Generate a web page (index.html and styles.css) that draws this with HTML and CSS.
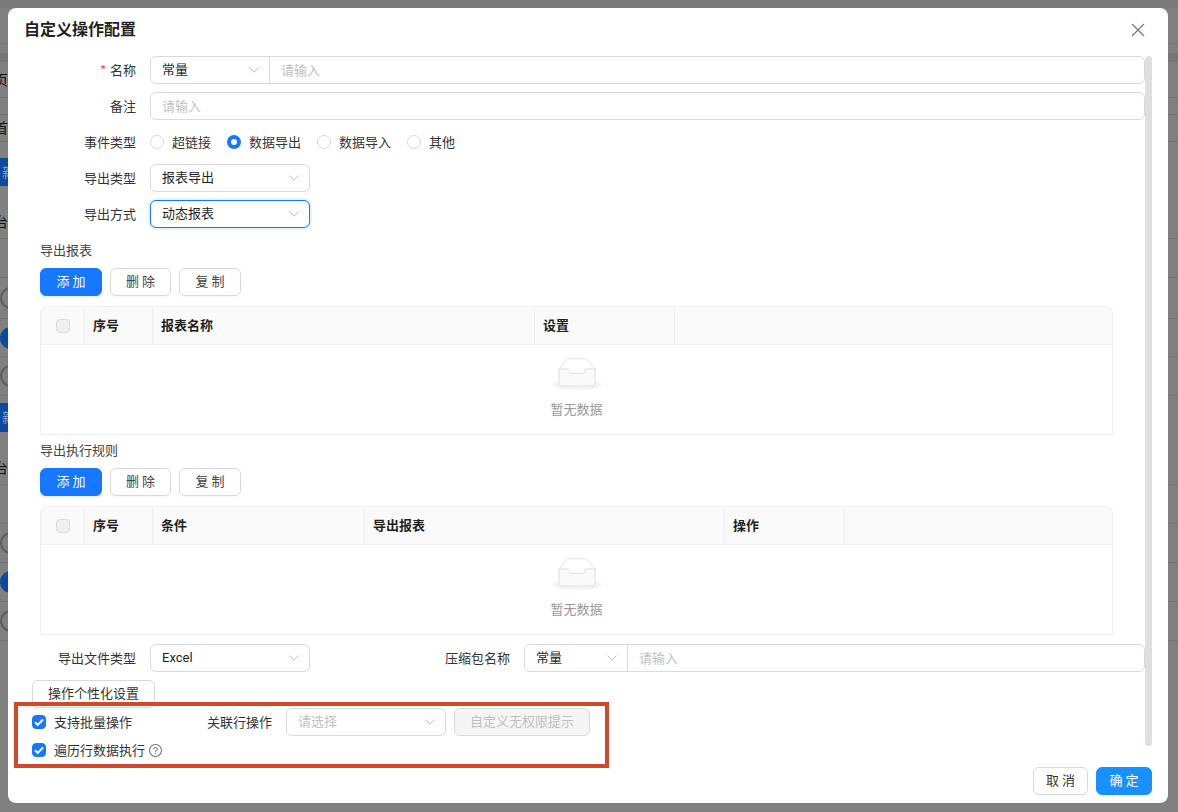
FILE: index.html
```html
<!DOCTYPE html>
<html lang="zh-CN">
<head>
  <meta charset="UTF-8" />
  <title>自定义操作配置</title>
  <link rel="stylesheet" href="styles.css">
</head>
<body>

  <!-- page behind the mask, only its edges show -->
  <div class="backdrop">
    <div class="bg-top"></div>
    <div class="bg-row h10"></div>
    <div class="bg-band"></div>
    <div class="bg-row h36"><span class="bg-char">页</span></div>
    <div class="bg-row h17"></div>
    <div class="bg-row h27"><span class="bg-char">首</span></div>
    <div class="bg-blank h16"></div>
    <div class="bg-btn">新</div>
    <div class="bg-blank h19"></div>
    <div class="bg-row h34"><span class="bg-char">台</span></div>
    <div class="bg-row h39"></div>
    <div class="bg-row h41"><span class="bg-ring"></span></div>
    <div class="bg-row h38"><span class="bg-dot"></span></div>
    <div class="bg-row h39"><span class="bg-ring"></span></div>
    <div class="bg-blank h7"></div>
    <div class="bg-btn h29">新</div>
    <div class="bg-blank h19"></div>
    <div class="bg-row h34"><span class="bg-char">台</span></div>
    <div class="bg-row h39"></div>
    <div class="bg-row h39"><span class="bg-ring"></span></div>
    <div class="bg-row h39"><span class="bg-dot"></span></div>
    <div class="bg-row h39"><span class="bg-ring"></span></div>
  </div>

  <div class="modal">
    <div class="modal-header">
      <h2>自定义操作配置</h2>
      <svg class="close-icon" width="14" height="14" viewBox="0 0 14 14">
        <path d="M1 1l12 12M13 1L1 13" stroke="#777" stroke-width="1.2" fill="none"/>
      </svg>
    </div>

    <div class="modal-body">
      <div class="form">
        <div class="form-group">
          <div class="form-row">
            <label class="form-label"><span class="required">*</span>名称</label>
            <div class="input-group grow">
              <div class="group-select w119">常量
                <svg class="chevron" viewBox="0 0 10 6"><path d="M.5.5L5 5.200 9.500.5"/></svg>
              </div>
              <div class="group-input">请输入</div>
            </div>
          </div>
          <div class="form-row">
            <label class="form-label">备注</label>
            <div class="input grow placeholder">请输入</div>
          </div>
          <div class="form-row">
            <label class="form-label">事件类型</label>
            <div class="radios">
              <span class="radio"><i></i>超链接</span>
              <span class="radio checked"><i></i>数据导出</span>
              <span class="radio"><i></i>数据导入</span>
              <span class="radio"><i></i>其他</span>
            </div>
          </div>
          <div class="form-row">
            <label class="form-label">导出类型</label>
            <div class="select">报表导出
              <svg class="chevron" viewBox="0 0 10 6"><path d="M.5.5L5 5.200 9.500.5"/></svg>
            </div>
          </div>
          <div class="form-row">
            <label class="form-label">导出方式</label>
            <div class="select focused">动态报表
              <svg class="chevron" viewBox="0 0 10 6"><path d="M.5.5L5 5.200 9.500.5"/></svg>
            </div>
          </div>
        </div>

        <div class="section">
          <div class="section-title">导出报表</div>
          <div class="toolbar">
            <button class="btn primary">添 加</button>
            <button class="btn">删 除</button>
            <button class="btn">复 制</button>
          </div>
          <div class="table-wrap">
            <div class="table-head">
              <div class="cell check-cell"><span class="checkbox"></span></div>
              <div class="cell w68">序号</div>
              <div class="cell w382">报表名称</div>
              <div class="cell w140">设置</div>
              <div class="cell fill"></div>
            </div>
            <div class="table-empty">
              <svg class="empty-icon" width="50" height="32" viewBox="0 0 64 41">
                <g transform="translate(0 1)" fill="none" fill-rule="evenodd">
                  <ellipse fill="#f5f5f5" cx="32" cy="33" rx="32" ry="7"/>
                  <g fill-rule="nonzero" stroke="#d9d9d9">
                    <path d="M55 12.760L44.854 1.258C44.367.474 43.656 0 42.907 0H21.093c-.749 0-1.460.474-1.947 1.257L9 12.761V22h46v-9.240z"/>
                    <path d="M41.613 15.931c0-1.605.994-2.930 2.227-2.931H55v18.137C55 33.260 53.680 35 52.050 35h-40.100C10.320 35 9 33.259 9 31.137V13h11.160c1.233 0 2.227 1.323 2.227 2.928v.022c0 1.605 1.005 2.901 2.237 2.901h14.752c1.232 0 2.237-1.308 2.237-2.913v-.007z" fill="#fafafa"/>
                  </g>
                </g>
              </svg>
              <div class="empty-text">暂无数据</div>
            </div>
          </div>
        </div>

        <div class="section">
          <div class="section-title">导出执行规则</div>
          <div class="toolbar">
            <button class="btn primary">添 加</button>
            <button class="btn">删 除</button>
            <button class="btn">复 制</button>
          </div>
          <div class="table-wrap">
            <div class="table-head">
              <div class="cell check-cell"><span class="checkbox"></span></div>
              <div class="cell w68">序号</div>
              <div class="cell w212">条件</div>
              <div class="cell w360">导出报表</div>
              <div class="cell w120">操作</div>
              <div class="cell fill"></div>
            </div>
            <div class="table-empty">
              <svg class="empty-icon" width="50" height="32" viewBox="0 0 64 41">
                <g transform="translate(0 1)" fill="none" fill-rule="evenodd">
                  <ellipse fill="#f5f5f5" cx="32" cy="33" rx="32" ry="7"/>
                  <g fill-rule="nonzero" stroke="#d9d9d9">
                    <path d="M55 12.760L44.854 1.258C44.367.474 43.656 0 42.907 0H21.093c-.749 0-1.460.474-1.947 1.257L9 12.761V22h46v-9.240z"/>
                    <path d="M41.613 15.931c0-1.605.994-2.930 2.227-2.931H55v18.137C55 33.260 53.680 35 52.050 35h-40.100C10.320 35 9 33.259 9 31.137V13h11.160c1.233 0 2.227 1.323 2.227 2.928v.022c0 1.605 1.005 2.901 2.237 2.901h14.752c1.232 0 2.237-1.308 2.237-2.913v-.007z" fill="#fafafa"/>
                  </g>
                </g>
              </svg>
              <div class="empty-text">暂无数据</div>
            </div>
          </div>
        </div>

        <div class="form-row file-row">
          <label class="form-label">导出文件类型</label>
          <div class="select latin">Excel
            <svg class="chevron" viewBox="0 0 10 6"><path d="M.5.5L5 5.200 9.500.5"/></svg>
          </div>
          <label class="form-label zip-label">压缩包名称</label>
          <div class="input-group grow">
            <div class="group-select w103">常量
              <svg class="chevron" viewBox="0 0 10 6"><path d="M.5.5L5 5.200 9.500.5"/></svg>
            </div>
            <div class="group-input">请输入</div>
          </div>
        </div>

        <button class="btn custom-btn">操作个性化设置</button>

        <div class="batch-row">
          <span class="check-item"><span class="checkbox on"><svg viewBox="0 0 14 14"><path d="M3 7.200l2.800 2.700L11 4.500"/></svg></span>支持批量操作</span>
          <label class="form-label rel-label">关联行操作</label>
          <div class="select disabled-text">请选择
            <svg class="chevron" viewBox="0 0 10 6"><path d="M.5.5L5 5.200 9.500.5"/></svg>
          </div>
          <button class="btn disabled">自定义无权限提示</button>
        </div>
        <div class="batch-row">
          <span class="check-item"><span class="checkbox on"><svg viewBox="0 0 14 14"><path d="M3 7.200l2.800 2.700L11 4.500"/></svg></span>遍历行数据执行</span>
          <svg class="help-icon" width="13" height="13" viewBox="64 64 896 896" fill="#777">
            <path d="M512 64C264.600 64 64 264.600 64 512s200.600 448 448 448 448-200.600 448-448S759.400 64 512 64zm0 820c-205.400 0-372-166.600-372-372s166.600-372 372-372 372 166.600 372 372-166.600 372-372 372z"/>
            <path d="M623.600 316.700C593.600 290.400 554 276 512 276s-81.600 14.500-111.600 40.700C369.200 344 352 380.700 352 420v7.600c0 4.400 3.600 8 8 8h48c4.400 0 8-3.600 8-8V420c0-44.100 43.100-80 96-80s96 35.900 96 80c0 31.100-22 59.600-56.100 72.700-21.200 8.100-39.200 22.300-52.100 40.900-13.100 19-19.900 41.800-19.900 64.900V620c0 4.400 3.600 8 8 8h48c4.400 0 8-3.600 8-8v-22.700a48.300 48.300 0 0 1 30.900-44.800c59-22.700 97.100-74.700 97.100-132.500.1-39.300-17.100-76-48.300-103.300z"/>
            <path d="M472 732a40 40 0 1 0 80 0 40 40 0 1 0-80 0z"/>
          </svg>
        </div>
      </div>
      <div class="scroll-thumb"></div>
    </div>

    <div class="modal-footer">
      <button class="btn footer-btn">取 消</button>
      <button class="btn footer-btn confirm">确 定</button>
    </div>
  </div>

  <!-- annotation drawn over the screenshot -->
  <div class="highlight-box"></div>

</body>
</html>
```

FILE: styles.css
```css
* { box-sizing: border-box; margin: 0; padding: 0; }

html, body {
  width: 1178px;
  height: 812px;
  overflow: hidden;
}

body {
  position: relative;
  background: #808080;
  font-family: "Noto Sans CJK SC", "Noto Sans", sans-serif;
  font-size: 13px;
  color: #1f1f1f;
  padding: 8px 10px 9px 8px;
}

/* Page behind the mask */
.backdrop {
  position: absolute;
  left: 0; top: 0;
  width: 100%; height: 100%;
  display: flex;
  flex-direction: column;
  overflow: hidden;
}

.bg-top { height: 44px; border-bottom: 1px solid #737373; background: linear-gradient(#7a7a7a 8px, #808080 8px); }
.bg-band { height: 8px; background: #767676; flex: none; }
.bg-row { display: flex; align-items: center; border-bottom: 1px solid #757575; flex: none; }
.bg-blank { flex: none; }
.bg-char { margin-left: -6px; padding-bottom: 2px; font-size: 14px; color: #111; }
.bg-btn {
  flex: none;
  width: 8px;
  height: 28px;
  background: #0b4a9e;
  color: #8da6cc;
  font-size: 13px;
  line-height: 28px;
  overflow: hidden;
  text-indent: 2px;
}
.bg-ring { width: 22px; height: 22px; border: 2px solid #5e5e5e; border-radius: 50%; }
.bg-dot { width: 22px; height: 22px; background: #0b4a9e; border-radius: 50%; }

.h7 { height: 7px; }
.h10 { height: 10px; }
.h16 { height: 16px; }
.h17 { height: 17px; }
.h19 { height: 19px; }
.h27 { height: 27px; }
.h29 { height: 29px; }
.h34 { height: 34px; }
.h36 { height: 36px; }
.h38 { height: 38px; }
.h39 { height: 39px; }
.h41 { height: 41px; }

/* Modal */
.modal {
  position: relative;
  width: 1160px;
  height: 795px;
  background: #fff;
  border-radius: 8px;
  display: flex;
  flex-direction: column;
}

.modal-header {
  height: 48px;
  flex: none;
  display: flex;
  align-items: center;
  justify-content: space-between;
  padding: 0 23px 8px 16px;
}

.modal-header h2 {
  font-size: 16px;
  font-weight: 700;
  line-height: 24px;
}

.close-icon { display: block; margin-top: 4px; }

.modal-body {
  flex: 1;
  display: flex;
  align-items: flex-start;
  min-height: 0;
}

.form { width: 1137px; flex: none; }

.scroll-thumb {
  width: 7px;
  height: 690px;
  background: #dcdfe4;
  border-radius: 4px;
  flex: none;
}

.modal-footer {
  flex: none;
  display: flex;
  justify-content: flex-end;
  gap: 8px;
  padding: 0 16px 8px 0;
}

/* Form */
.form-group {
  display: flex;
  flex-direction: column;
  gap: 8px;
  margin-bottom: 7px;
}

.form-row {
  display: flex;
  align-items: center;
  height: 28px;
}

.form-label {
  width: 128px;
  margin-right: 14px;
  padding-bottom: 2px;
  flex: none;
  text-align: right;
  color: #333;
}

.required { color: #ff4d4f; margin-right: 4px; }

.grow { flex: 1; }

.input, .select, .input-group {
  height: 28px;
  border: 1px solid #d9d9d9;
  border-radius: 6px;
  background: #fff;
  line-height: 24px;
}

.input { padding: 0 11px; line-height: 26px; }
.placeholder, .group-input { color: #bfbfbf; }

.select {
  position: relative;
  width: 160px;
  flex: none;
  padding: 0 11px;
}

.select.latin {
  font-family: Roboto, sans-serif;
  line-height: 26px;
}

.select.focused {
  border-color: #1677ff;
  box-shadow: 0 0 0 2px rgba(5, 145, 255, 0.1);
}

.disabled-text { color: #bfbfbf; }

.chevron {
  position: absolute;
  right: 10px;
  top: 10px;
  width: 10px;
  height: 6px;
  fill: none;
  stroke: #bdbdbd;
  stroke-width: 1;
}

.input-group { display: flex; }

.group-select {
  position: relative;
  flex: none;
  padding: 0 11px;
  border-right: 1px solid #d9d9d9;
}

.w119 { width: 119px; }
.w103 { width: 103px; }

.group-input { flex: 1; padding: 0 11px; line-height: 26px; }

.radios { display: flex; gap: 16px; }

.radio {
  display: flex;
  align-items: center;
  gap: 8px;
  padding-bottom: 2px;
  color: #333;
}

.radio i {
  width: 14px;
  height: 14px;
  margin-top: 2px;
  border: 1px solid #d9d9d9;
  border-radius: 50%;
  background: #fff;
}

.radio.checked i {
  border: 4px solid #1677ff;
}

/* Sections */
.section { margin-left: 32px; padding-top: 5px; }

.section-title {
  line-height: 20px;
  padding-bottom: 2px;
  color: #444;
  margin-bottom: 6px;
}

.toolbar { display: flex; gap: 8px; margin-bottom: 10px; }

.toolbar .btn { width: 61px; padding-left: 0; padding-right: 0; }
.toolbar .btn:nth-child(odd) { width: 62px; }

.btn {
  height: 28px;
  padding: 0 15px 2px;
  border: 1px solid #d9d9d9;
  border-radius: 6px;
  background: #fff;
  color: #444;
  font-family: inherit;
  font-size: 13px;
  line-height: 24px;
  cursor: pointer;
  box-shadow: 0 2px 0 rgba(0, 0, 0, 0.02);
}

.btn.primary {
  background: #1677ff;
  border-color: #1677ff;
  color: #fff;
  box-shadow: 0 2px 0 rgba(5, 145, 255, 0.1);
}

.btn.disabled {
  background: #f5f5f5;
  color: #bfbfbf;
  box-shadow: none;
  width: 136px;
  padding: 0 0 2px;
}

.footer-btn { padding: 0 12px 2px; color: #333; }
.footer-btn.confirm { background: #1890ff; border-color: #1890ff; color: #fff; width: 56px; }

/* Tables */
.table-wrap {
  width: 1073px;
  height: 129px;
  border: 1px solid #f0f0f0;
  border-top: none;
  border-radius: 8px 8px 0 0;
}

.table-head {
  display: flex;
  height: 39px;
  margin: 0 -1px;
  background: #fafafa;
  border: 1px solid #f0f0f0;
  border-radius: 8px 8px 0 0;
}

.cell {
  flex: none;
  display: flex;
  align-items: center;
  padding: 0 8px 2px;
  font-weight: 700;
  border-right: 1px solid #f0f0f0;
}

.check-cell { width: 44px; justify-content: center; padding-bottom: 0; }
.w68 { width: 68px; }
.w120 { width: 120px; }
.w140 { width: 140px; }
.w212 { width: 212px; }
.w360 { width: 360px; }
.w382 { width: 382px; }
.cell.fill { flex: 1; border-right: none; }

.checkbox {
  display: block;
  width: 14px;
  height: 14px;
  flex: none;
  background: #f0f0f0;
  border: 1px solid #d9d9d9;
  border-radius: 4px;
}

.checkbox.on {
  background: #1677ff;
  border-color: #1677ff;
}

.checkbox svg {
  display: block;
  width: 14px;
  height: 14px;
  margin: -1px;
  fill: none;
  stroke: #fff;
  stroke-width: 2;
}

.table-empty {
  display: flex;
  flex-direction: column;
  align-items: center;
  padding-top: 13px;
}

.empty-icon { display: block; }

.empty-text {
  margin-top: 9px;
  color: #999;
  line-height: 20px;
}

/* Bottom of the form */
.file-row { margin-top: 9px; }

.file-row .zip-label { width: 200px; }

.custom-btn { display: block; margin: 8px 0 0 24px; color: #333; }

.batch-row {
  display: flex;
  align-items: center;
  height: 28px;
  margin-left: 24px;
  position: relative;
}

.check-item {
  display: flex;
  align-items: center;
  gap: 8px;
  padding-bottom: 2px;
  color: #333;
}

.check-item .checkbox { margin-top: 2px; }

.form-label.rel-label { width: auto; margin-left: 75px; }

.batch-row .select { margin-right: 8px; }

.help-icon { margin-left: 4px; }

/* Red annotation */
.highlight-box {
  position: absolute;
  left: 14px;
  top: 702px;
  width: 595px;
  height: 66px;
  border: 4px solid #d2492a;
}
```
